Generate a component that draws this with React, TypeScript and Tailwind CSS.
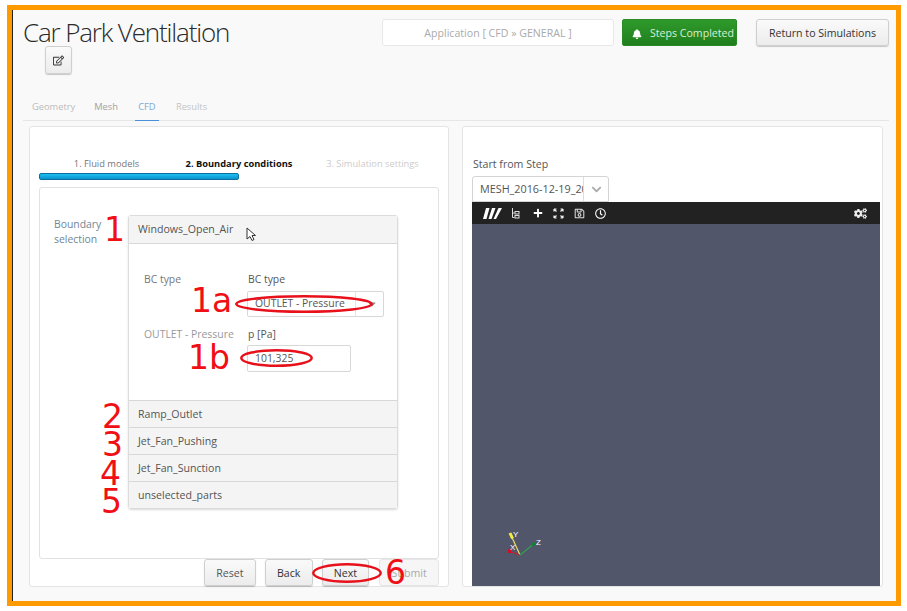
import React from "react";
import { FaBell, FaRegEdit, FaPlus, FaRegSave, FaRegClock, FaCogs, FaChevronDown, FaCaretDown } from "react-icons/fa";

const btn =
  "flex items-center justify-center rounded-[3px] border border-[#cfcfcf] bg-gradient-to-b from-[#fafafa] to-[#ececec] shadow-[0_1px_1px_rgba(0,0,0,0.2)] text-[#333]";

function Num({ c, x, y }: { c: string; x: number; y: number }) {
  return (
    <span
      className="absolute text-[#f00f14] leading-none text-[33px]"
      style={{ left: x, top: y, fontFamily: '"DejaVu Sans", sans-serif' }}
    >
      {c}
    </span>
  );
}

function Ellipse({ x, y, w, h }: { x: number; y: number; w: number; h: number }) {
  return (
    <svg className="absolute" style={{ left: x, top: y }} width={w} height={h}>
      <ellipse cx={w / 2} cy={h / 2} rx={w / 2 - 1.25} ry={h / 2 - 1.25} fill="none" stroke="#e8101a" strokeWidth="2.4" />
    </svg>
  );
}

function AccRow({ t }: { t: string }) {
  return (
    <div className="h-[27px] shrink-0 flex items-center pl-[9px] bg-[#f4f4f4] border-t border-[#d8d8d8] text-[#555] text-[10.6px] leading-[16px]">
      {t}
    </div>
  );
}

export default function App() {
  return (
    <div
      className="relative w-[907px] h-[611px] bg-white overflow-hidden text-[10.6px] pt-[5px] pl-[7px]"
      style={{ fontFamily: '"Open Sans", sans-serif' }}
    >
      <div className="w-[894px] h-[601px] border-[5px] border-[#ff9a00] bg-[#f9f9f9] flex flex-col">
        <div className="border-l border-[#222] h-full pl-[10px] pr-[7px] flex flex-col">
          {/* Header */}
          <div className="flex items-start h-[96px] shrink-0">
            <div className="flex flex-col w-[348px]">
              <h1 className="text-[26px] font-light leading-[27px] mt-[9px] text-[#2a2a2a] tracking-[-1.15px]">
                Car Park Ventilation
              </h1>
              <div className={`${btn} w-[27px] h-[28px] ml-[22px]`}>
                <FaRegEdit className="text-[#333] w-[11px] h-[11px]" />
              </div>
            </div>
            <div className="flex items-center mt-[9px] ml-[11px]">
              <div className="w-[232px] h-[27px] rounded-[3px] border border-[#e8e8e8] bg-white flex items-center justify-center text-[#aaa] pt-[2px]">
                Application [ CFD » GENERAL ]
              </div>
              <div className="ml-[8px] w-[115px] h-[27px] rounded-[2px] bg-gradient-to-b from-[#2f9a2b] to-[#1f7f1d] border border-[#2a8a26] text-[#d9efd6] flex items-center justify-center gap-[8px] pt-[2px] pl-[7px]">
                <FaBell className="w-[10px] h-[10px] text-white" />
                Steps Completed
              </div>
              <div className={`${btn} ml-[19px] w-[133px] h-[27px] text-[#222] pt-[2px]`}>Return to Simulations</div>
            </div>
          </div>

          {/* Tabs */}
          <div className="flex h-[15px] shrink-0 border-b border-[#e6e6e6] pl-[9px] text-[9.3px] leading-[16px]">
            <span className="text-[#bbb] h-[15px] mt-[-7px]">Geometry</span>
            <span className="text-[#a2a2a2] h-[15px] mt-[-7px] ml-[19px]">Mesh</span>
            <span className="text-[#7fa8d8] h-[22px] mt-[-7px] ml-[17px] border-b border-[#4a90d9] w-[24px] text-center">CFD</span>
            <span className="text-[#c4c4c4] h-[15px] mt-[-7px] ml-[17px]">Results</span>
          </div>

          {/* Panels */}
          <div className="flex mt-[5px] ml-[6px] gap-[13px] h-[461px] shrink-0">
            <div className="w-[420px] h-full bg-white border border-[#e4e4e4] rounded-[3px] pt-[29px] px-[9px] flex flex-col">
              <div className="flex h-[15px] items-center text-[9.3px]">
                <span className="w-[133px] text-center text-[#777] pl-[2px]">1. Fluid models</span>
                <span className="w-[134px] text-center text-[#111] font-bold">2. Boundary conditions</span>
                <span className="w-[133px] text-center text-[#ccc]">3. Simulation settings</span>
              </div>
              <div className="w-[200px] h-[7px] shrink-0 rounded-[2px] border border-[#0a6fa0] bg-gradient-to-b from-[#1cc0f0] to-[#0b93cf] mt-[2px]" />
              <div className="w-[400px] h-[372px] mt-[7px] border border-[#e2e2e2] rounded-[3px] flex pl-[14px] pt-[27px] shrink-0">
                <div className="w-[74px] text-[#6f8796] text-[10.4px] leading-[15px] pt-[2px]">
                  Boundary
                  <br />
                  selection
                </div>
                <div className="w-[270px] h-[294px] border border-[#dcdcdc] rounded-[3px] shadow-[0_1px_2px_rgba(0,0,0,0.15)] flex flex-col">
                  <div className="h-[28px] bg-[#f4f4f4] flex items-center pl-[9px] pt-[1px] text-[#555] border-b border-[#d8d8d8] shrink-0">
                    Windows_Open_Air
                  </div>
                  <div className="h-[156px] bg-white pl-[15px] pt-[28px] text-[10.4px] shrink-0">
                    <div className="flex">
                      <span className="w-[103px] text-[#777]">BC type</span>
                      <div className="flex flex-col">
                        <span className="text-[#555] h-[19px] pl-[1px]">BC type</span>
                        <div className="w-[137px] h-[26px] border border-[#d8d8d8] rounded-[2px] flex items-center pl-[7px] text-[#555]">
                          <span className="flex-1">OUTLET - Pressure</span>
                          <span className="w-[28px] h-full border-l border-[#e4e4e4] flex items-center justify-center">
                            <FaCaretDown className="w-[12px] h-[12px] text-[#888] ml-[4px]" />
                          </span>
                        </div>
                      </div>
                    </div>
                    <div className="flex mt-[10px]">
                      <span className="w-[103px] text-[#999]">OUTLET - Pressure</span>
                      <div className="flex flex-col">
                        <span className="text-[#555] h-[18px] pl-[1px]">p [Pa]</span>
                        <div className="w-[104px] h-[27px] border border-[#d8d8d8] rounded-[2px] flex items-center pl-[7px] text-[#555]">
                          101,325
                        </div>
                      </div>
                    </div>
                  </div>
                  <AccRow t="Ramp_Outlet" />
                  <AccRow t="Jet_Fan_Pushing" />
                  <AccRow t="Jet_Fan_Sunction" />
                  <AccRow t="unselected_parts" />
                </div>
              </div>
              <div className="flex h-[27px] shrink-0 ml-[165px]">
                <div className={`${btn} w-[52px] text-[#555] pt-[2px]`}>Reset</div>
                <div className={`${btn} w-[48px] ml-[9px] pt-[2px]`}>Back</div>
                <div className={`${btn} w-[48px] ml-[9px] pt-[2px]`}>Next</div>
                <div className="w-[60px] ml-[10px] flex items-center justify-center rounded-[3px] border border-[#e6e6e6] bg-[#f6f6f6] text-[#aaa] pt-[2px]">
                  Submit
                </div>
              </div>
            </div>

            <div className="w-[421px] h-full bg-white border border-[#e4e4e4] rounded-[3px] pt-[30px] pl-[9px] flex flex-col">
              <span className="text-[#555] ml-[1px] h-[19px] leading-[15px] shrink-0">Start from Step</span>
              <div className="w-[137px] h-[26px] border border-[#d4d4d4] rounded-t-[3px] flex items-center shrink-0">
                <span className="w-[110px] pl-[7px] overflow-hidden whitespace-nowrap text-[#555] text-[10.8px]">
                  MESH_2016-12-19_2016
                </span>
                <span className="flex-1 h-full border-l border-[#ddd] flex items-center justify-center">
                  <FaChevronDown className="w-[11px] h-[11px] text-[#aaa]" />
                </span>
              </div>
              <div className="w-[408px] flex-1 flex flex-col">
                <div className="h-[22px] bg-[#222] flex items-center pl-[11px] pr-[13px] shrink-0 text-white">
                  <svg width="19" height="13" viewBox="0 0 19 13" fill="#fff">
                    <polygon points="3,1 6.5,1 3.5,12 0,12" />
                    <polygon points="9,1 12.5,1 8.5,12 5.5,12" />
                    <polygon points="15.5,1 19,1 13,12 10.5,12" />
                  </svg>
                  <svg className="ml-[9px]" width="9" height="11" viewBox="0 0 9 11" fill="none" stroke="#ddd" strokeWidth="1">
                    <path d="M1.5 0v9.5h2M1.5 5h2" />
                    <rect x="4" y="3.5" width="4" height="2.5" />
                    <rect x="4" y="7.5" width="4" height="2.5" />
                  </svg>
                  <FaPlus className="ml-[13px] w-[10px] h-[10px]" />
                  <svg className="ml-[10px]" width="11" height="11" viewBox="0 0 11 11" stroke="#eee" strokeWidth="1.2" fill="none">
                    <path d="M1 1l2.5 2.5M1 1h2.5M1 1v2.5M10 1L7.5 3.5M10 1H7.5M10 1v2.5M1 10l2.5-2.5M1 10h2.5M1 10V7.5M10 10L7.5 7.5M10 10H7.5M10 10V7.5" />
                  </svg>
                  <FaRegSave className="ml-[10px] w-[11px] h-[11px] text-[#ddd]" />
                  <FaRegClock className="ml-[10px] w-[11px] h-[11px]" />
                  <FaCogs className="ml-auto w-[13px] h-[13px] text-[#eee]" />
                </div>
                <div className="flex-1 bg-[#52566b] relative">
                  <svg className="absolute left-[32px] top-[304px]" width="44" height="32" viewBox="0 0 44 32" fill="none">
                    <path d="M16 27L6 5" stroke="#e8e060" strokeWidth="1.2" />
                    <path d="M6 5l2.5 5.5" stroke="#f4ec40" strokeWidth="3" />
                    <path d="M16 27L4 23" stroke="#c02030" strokeWidth="1.2" />
                    <path d="M4 23h3" stroke="#d01020" strokeWidth="4" />
                    <path d="M16 27L31 15" stroke="#30a050" strokeWidth="1.2" />
                    <path d="M31 15l-3 2.5" stroke="#108030" strokeWidth="3" />
                    <text x="9" y="9" fill="#fff" fontSize="8" fontFamily="Liberation Sans">Y</text>
                    <text x="6" y="22" fill="#fff" fontSize="8" fontFamily="Liberation Sans">X</text>
                    <text x="32" y="17" fill="#fff" fontSize="8" fontFamily="Liberation Sans">Z</text>
                  </svg>
                </div>
              </div>
            </div>
          </div>
        </div>
      </div>

      {/* Annotations */}
      <Num c="1" x={104} y={213} />
      <Num c="1a" x={191} y={284} />
      <Num c="1b" x={188} y={341} />
      <Num c="2" x={102} y={400} />
      <Num c="3" x={102} y={428} />
      <Num c="4" x={100} y={457} />
      <Num c="5" x={101} y={485} />
      <Num c="6" x={385} y={556} />
      <Ellipse x={235} y={295} w={138} h={18} />
      <Ellipse x={240} y={349} w={73} h={18} />
      <Ellipse x={312} y={563} w={70} h={20} />
      <svg className="absolute left-[246px] top-[227px]" width="11" height="15" viewBox="0 0 11 15">
        <path d="M1 1v11l3-2.5 2 4 2-1-2-4h3.5z" fill="#fff" stroke="#333" strokeWidth="1" />
      </svg>
    </div>
  );
}
